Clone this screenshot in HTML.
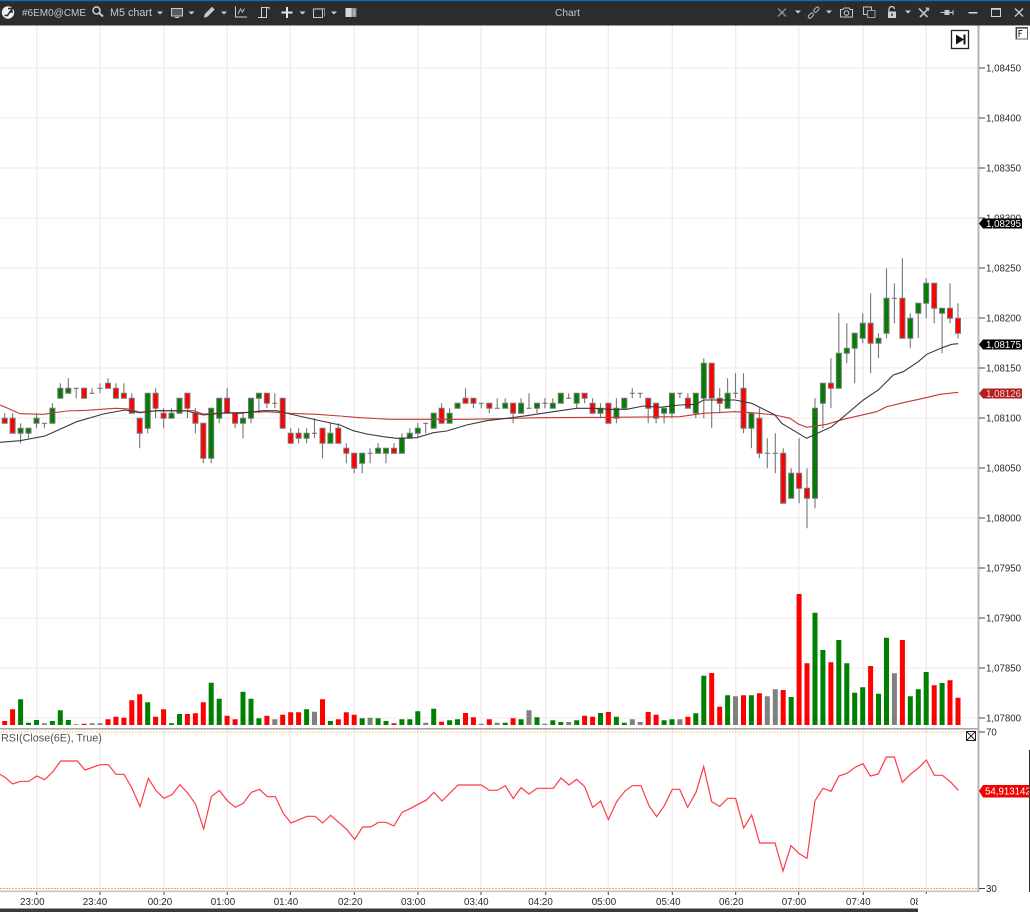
<!DOCTYPE html>
<html>
<head>
<meta charset="utf-8">
<title>Chart</title>
<style>
html,body{margin:0;padding:0;background:#fff;width:1030px;height:912px;overflow:hidden}
svg{display:block;position:absolute;left:0;top:0}
text{font-family:"Liberation Sans",sans-serif}
.p{font-size:9.7px;fill:#2a2a2a}
.t{font-size:9.8px;fill:#2a2a2a}
.w{font-size:9.7px;fill:#fff}
.b{font-size:10px;fill:#c8c8c8}
</style>
</head>
<body>
<svg width="1030" height="912" viewBox="0 0 1030 912" xmlns="http://www.w3.org/2000/svg">
<defs><clipPath id="cl"><rect x="0" y="892" width="918" height="17"/></clipPath></defs>
<rect width="1030" height="912" fill="#fff"/>

<!-- grid -->
<path stroke="#f6ebef" stroke-width="1.2" fill="none" d="M0 68H978M0 118H978M0 168H978M0 218H978M0 268H978M0 318H978M0 368H978M0 418H978M0 468H978M0 518H978M0 568H978M0 618H978M0 668H978M0 718H978"/>
<path stroke="#f3e7eb" stroke-width="1.2" fill="none" d="M36.7 25V891M100 25V891M164 25V891M227.3 25V891M290.3 25V891M354.3 25V891M418 25V891M481 25V891M545.7 25V891M608.3 25V891M672.3 25V891M735.7 25V891M798.7 25V891M863.3 25V891M926.3 25V891"/>

<!-- volume -->
<path stroke="#ff0000" stroke-width="5" fill="none" d="M4.7 721V725M12.6 709.3V725M84.1 723.7V725M108 719.3V725M115.9 716.7V725M123.9 717.7V725M131.8 700.3V725M139.7 694.3V725M155.6 716.7V725M163.6 709.3V725M187.4 714V725M195.4 713.3V725M203.3 702.3V725M227.1 715.7V725M235.1 719.3V725M266.9 715.7V725M282.7 714.7V725M290.7 712.3V725M298.6 712.3V725M322.5 699.3V725M338.3 719.3V725M346.3 712.3V725M354.2 714.7V725M394 723.3V725M441.6 721.7V725M465.5 713V725M473.4 717.3V725M489.3 719.3V725M513.1 718.3V725M584.6 715.7V725M592.6 716.7V725M608.4 712V725M648.2 712V725M656.1 714.7V725M687.9 716.7V725M711.7 673V725M719.7 706.7V725M743.5 695.3V725M759.4 693.3V725M783.2 690V725M799.1 594V725M807 663.3V725M830.9 662.3V725M870.6 666V725M902.4 640V725M934.2 685.3V725M950 680.3V725M958 697.7V725"/>
<path stroke="#008000" stroke-width="5" fill="none" d="M20.6 699.3V725M28.5 722.7V725M36.5 720V725M52.4 721V725M60.3 710.3V725M68.3 720V725M147.7 702.3V725M171.5 723.3V725M179.5 714V725M211.2 682.7V725M219.2 698.7V725M243 691.7V725M251 698.7V725M258.9 718.3V725M306.6 709.3V725M330.4 721V725M362.2 718.3V725M378.1 718.3V725M386 721V725M401.9 719.3V725M409.8 719.3V725M417.8 711.3V725M433.7 708.7V725M449.6 720.3V725M457.5 719.3V725M505.2 722.7V725M521.1 719.3V725M537 717.3V725M552.8 720.3V725M560.8 722V725M576.7 720.3V725M600.5 713V725M616.4 716.7V725M624.3 722.7V725M664.1 720.3V725M672 719.3V725M695.8 713.3V725M703.8 675.7V725M727.6 695.3V725M751.4 695.3V725M791.2 697V725M815 612.7V725M822.9 650V725M838.8 640V725M846.8 663.3V725M854.7 692.7V725M862.7 687.3V725M878.5 693.7V725M886.5 637.7V725M910.3 696.3V725M918.3 689.3V725M926.2 672V725M942.1 683V725"/>
<path stroke="#808080" stroke-width="5" fill="none" d="M44.4 723.3V725M76.2 724.3V725M92.1 723.3V725M100 723.3V725M274.8 719.3V725M314.5 711.7V725M370.1 717.7V725M425.7 722.7V725M481.3 723.7V725M497.2 722.7V725M529 710.3V725M544.9 723.7V725M568.7 722V725M632.3 719.3V725M640.2 722V725M679.9 719.3V725M735.5 696.3V725M767.3 696.3V725M775.3 689.3V725M894.4 673.3V725"/>

<!-- candles -->
<g transform="translate(0 .3)">
<path stroke="#777" stroke-width="1.1" fill="none" d="M4.7 413V423M12.6 413V433M20.6 423V443M28.5 428V438M36.5 413V428M44.4 423V428M42 423h5M52.4 403V423M60.3 383V398M68.3 378V393M76.2 388V398M73.7 388h5M84.1 388V398M92.1 388V393M89.6 393h5M100 383V393M97.5 388h5M108 378V388M115.9 383V398M123.9 383V398M131.8 393V413M139.7 418V448M147.7 393V433M155.6 388V418M163.6 408V428M171.5 408V418M179.5 398V413M187.4 393V418M195.4 408V433M203.3 423V463M211.2 408V463M219.2 398V423M227.1 388V413M235.1 413V428M243 413V438M251 398V423M258.9 393V413M266.9 393V408M274.8 393V408M272.3 403h5M282.7 398V428M290.7 428V443M298.6 428V443M306.6 428V443M314.5 418V438M312 433h5M322.5 428V458M330.4 423V443M338.3 423V443M346.3 443V463M354.2 453V473M362.2 453V473M370.1 448V463M367.6 453h5M378.1 443V453M386 448V463M394 443V453M401.9 433V453M409.8 428V438M417.8 423V438M425.7 423V433M423.2 423h5M433.7 413V428M441.6 403V423M449.6 408V423M457.5 403V408M465.5 388V403M473.4 398V408M481.3 403V408M478.8 403h5M489.3 403V413M497.2 398V408M494.7 408h5M505.2 398V408M513.1 403V423M521.1 398V413M529 393V408M526.5 408h5M537 403V413M544.9 398V408M542.4 403h5M552.8 398V408M560.8 393V403M568.7 393V398M566.2 398h5M576.7 393V408M584.6 393V403M592.6 398V413M600.5 403V418M608.4 403V423M616.4 398V423M624.3 398V408M632.3 388V398M629.8 393h5M640.2 393V398M637.7 393h5M648.2 398V423M656.1 403V423M664.1 408V423M672 393V418M679.9 393V398M677.4 393h5M687.9 393V408M695.8 393V418M703.8 358V418M711.7 363V428M719.7 388V413M727.6 378V408M735.5 373V398M733 393h5M743.5 373V433M751.4 413V448M759.4 408V458M767.3 438V468M764.8 453h5M775.3 433V473M772.8 453h5M783.2 448V503M791.2 468V498M799.1 438V503M807 468V528M815 398V508M822.9 383V428M830.9 358V408M838.8 313V388M846.8 323V363M854.7 333V383M862.7 313V343M870.6 293V373M878.5 333V358M886.5 268V338M894.4 283V323M891.9 298h5M902.4 258V338M910.3 313V348M918.3 303V338M926.2 278V318M934.2 283V323M942.1 308V353M950 283V323M958 303V338"/>
<g stroke="#777" stroke-width="1">
<path fill="#ff0000" d="M2.2 418h5v5h-5zM10.1 418h5v15h-5zM81.6 388h5v10h-5zM105.5 383h5v5h-5zM113.4 388h5v10h-5zM121.4 393h5v5h-5zM129.3 398h5v15h-5zM137.2 418h5v15h-5zM153.1 393h5v15h-5zM161.1 413h5v5h-5zM184.9 393h5v15h-5zM192.9 413h5v10h-5zM200.8 423h5v35h-5zM224.6 398h5v15h-5zM232.6 413h5v10h-5zM264.4 393h5v10h-5zM280.2 398h5v30h-5zM288.2 433h5v10h-5zM296.1 433h5v5h-5zM320 428h5v15h-5zM335.8 428h5v15h-5zM343.8 448h5v5h-5zM351.7 453h5v15h-5zM391.5 448h5v5h-5zM439.1 408h5v15h-5zM463 398h5v5h-5zM470.9 398h5v5h-5zM486.8 403h5v5h-5zM510.6 403h5v10h-5zM582.1 393h5v5h-5zM590.1 403h5v10h-5zM605.9 403h5v20h-5zM645.7 398h5v10h-5zM653.6 403h5v15h-5zM685.4 398h5v10h-5zM709.2 363h5v35h-5zM717.2 398h5v5h-5zM741 388h5v40h-5zM756.9 418h5v35h-5zM780.7 453h5v50h-5zM796.6 473h5v15h-5zM804.5 488h5v10h-5zM828.4 383h5v5h-5zM868.1 323h5v20h-5zM899.9 298h5v40h-5zM931.7 283h5v25h-5zM947.5 308h5v10h-5zM955.5 318h5v15h-5z"/>
<path fill="#007f00" d="M18.1 428h5v5h-5zM26 428h5v5h-5zM34 418h5v5h-5zM49.9 408h5v15h-5zM57.8 388h5v10h-5zM65.8 388h5v5h-5zM145.2 393h5v35h-5zM169 413h5v5h-5zM177 398h5v15h-5zM208.7 408h5v50h-5zM216.7 398h5v20h-5zM240.5 418h5v5h-5zM248.5 398h5v20h-5zM256.4 393h5v5h-5zM304.1 433h5v5h-5zM327.9 433h5v10h-5zM359.7 453h5v10h-5zM375.6 448h5v5h-5zM383.5 448h5v5h-5zM399.4 438h5v15h-5zM407.3 433h5v5h-5zM415.3 428h5v5h-5zM431.2 413h5v15h-5zM447.1 413h5v10h-5zM455 403h5v5h-5zM502.7 403h5v5h-5zM518.6 403h5v10h-5zM534.5 403h5v5h-5zM550.3 403h5v5h-5zM558.3 393h5v10h-5zM574.2 393h5v10h-5zM598 408h5v5h-5zM613.9 408h5v10h-5zM621.8 398h5v10h-5zM661.6 408h5v5h-5zM669.5 393h5v20h-5zM693.3 393h5v20h-5zM701.3 363h5v35h-5zM725.1 393h5v15h-5zM748.9 413h5v15h-5zM788.7 473h5v25h-5zM812.5 408h5v90h-5zM820.4 383h5v20h-5zM836.3 353h5v35h-5zM844.3 348h5v5h-5zM852.2 333h5v15h-5zM860.2 323h5v15h-5zM876 338h5v5h-5zM884 298h5v35h-5zM907.8 318h5v20h-5zM915.8 303h5v10h-5zM923.7 283h5v20h-5zM939.6 308h5v5h-5z"/>
</g>
</g>

<!-- moving averages -->
<polyline fill="none" stroke="#c23a3a" stroke-width="1.1" points="0,405 6.7,407.7 20,413.7 43.3,414.3 66.7,411 86.7,410.3 115,408.3 128.3,409 140,412.3 156.7,410.7 193.3,410.7 203.3,414 216.7,413.3 266.7,411.7 290,413.3 316.7,414.3 340,416 360,417.7 390,419.3 466.7,419.3 500,418.7 540,417.7 613.3,417.3 680,416.7 703.3,413.3 735,411.7 751.7,412.7 775,415 790,418.3 798.3,424 806.7,427.3 826.7,424.3 843.3,419.3 876.7,411.7 886.7,406.7 903.3,402.7 923.3,398.3 940,394.3 958.3,392.3"/>
<polyline fill="none" stroke="#3a3a3a" stroke-width="1.1" points="0,442.3 20,440.7 45,436 58.3,430 76.7,421.7 103.3,414 125,410 140,412.7 156.7,410.7 186.7,411 203.3,415 226.7,412.7 240,413.3 263.3,410.7 276.7,410.7 290,414 316.7,420 340,425 353.3,430.7 366.7,434 383.3,436.7 396.7,438.3 416.7,437.7 433.3,432.7 446.7,431 466.7,425 486.7,420.7 506.7,418.3 526.7,415.7 553.3,411.7 576.7,408.3 593.3,408.3 610,409.3 626.7,409.3 643.3,406 660,407.3 680,405 696,404.3 703.7,400 735,400 751.7,403.3 775,415 781.7,423.3 806.7,438.3 831.7,426.7 863.3,400 878.3,390 893.3,375 903.3,371.7 918.3,361.7 926.7,354.3 943.3,347.3 951.7,344.3 958.3,343.7"/>

<!-- separators -->
<rect x="0" y="728" width="978" height="1.6" fill="#a8a8a8"/>
<path d="M0 732H978" stroke="#f5c15c" stroke-width="1" stroke-dasharray="1.5 1.5" fill="none"/>
<path d="M0 888.5H978" stroke="#f4b22e" stroke-width="1" stroke-dasharray="2 1" fill="none"/>
<rect x="0" y="890.5" width="978" height="1.6" fill="#c4c4c4"/>

<!-- RSI -->
<polyline fill="none" stroke="#ff3a44" stroke-width="1.2" transform="translate(0 750) scale(.33333)" vector-effect="non-scaling-stroke" points="0,73 15,82 38,102 62,94 87,94 110,78 134,89 158,66 182,33 232,33 255,60 300,44 325,44 348,73 372,73 396,115 420,170 445,85 468,122 492,145 516,134 540,104 564,130 587,163 611,237 634,140 658,121 682,152 706,172 730,160 754,127 778,118 802,140 826,140 850,190 873,219 897,209 921,199 945,199 968,219 992,196 1016,217 1040,238 1064,268 1088,231 1112,231 1136,217 1158,217 1182,228 1206,187 1230,176 1254,163 1278,151 1302,127 1326,153 1374,105 1444,105 1468,121 1492,121 1516,107 1540,146 1545,138"/>
<polyline fill="none" stroke="#ff3a44" stroke-width="1.2" transform="translate(515 750) scale(.33333)" vector-effect="non-scaling-stroke" points="0,138 18,113 42,132 66,115 115,115 138,84 162,105 185,88 209,110 233,172 257,153 280,209 305,155 330,123 352,107 378,107 402,167 425,200 448,167 472,118 494,118 518,172 543,127 566,50 590,155 614,169 638,145 662,145 686,234 710,195 734,279 780,279 804,363 828,287 852,311 876,325 900,152 924,115 948,124 972,78 996,70 1020,52 1044,41 1066,78 1090,72 1114,21 1138,21 1162,97 1186,73 1210,54 1234,30 1258,76 1282,76 1306,95 1330,121"/>
<text x="1" y="741.5" font-size="10.8" fill="#555">RSI(Close(6E), True)</text>

<!-- axis -->
<rect x="977.5" y="25" width="2" height="867" fill="#b4b4b4"/>
<path stroke="#444" stroke-width="1" fill="none" d="M979 68h6M979 118h6M979 168h6M979 218h6M979 268h6M979 318h6M979 368h6M979 418h6M979 468h6M979 518h6M979 568h6M979 618h6M979 668h6M979 718h6M979 732h6M979 888.5h6"/>
<g class="p">
<text class="p" x="986" y="71.5">1,08450</text>
<text class="p" x="986" y="121.5">1,08400</text>
<text class="p" x="986" y="171.5">1,08350</text>
<text class="p" x="986" y="221.5">1,08300</text>
<text class="p" x="986" y="271.5">1,08250</text>
<text class="p" x="986" y="321.5">1,08200</text>
<text class="p" x="986" y="371.5">1,08150</text>
<text class="p" x="986" y="421.5">1,08100</text>
<text class="p" x="986" y="471.5">1,08050</text>
<text class="p" x="986" y="521.5">1,08000</text>
<text class="p" x="986" y="571.5">1,07950</text>
<text class="p" x="986" y="621.5">1,07900</text>
<text class="p" x="986" y="671.5">1,07850</text>
<text class="p" x="986" y="721.5">1,07800</text>
<text class="p" x="986" y="735.5">70</text>
<text class="p" x="986" y="892">30</text>
</g>

<!-- tags -->
<path fill="#000" d="M979 223.5l4-5h39v10h-39z"/>
<text class="w" x="986" y="227">1,08295</text>
<path fill="#000" d="M979 344.5l4-5h39v10h-39z"/>
<text class="w" x="986" y="348">1,08175</text>
<path fill="#b02020" d="M979 393.5l4-5h39v10h-39z"/>
<text class="w" x="986" y="397" style="fill:#f4d0d0">1,08126</text>
<path fill="#f00000" d="M979 791l4-6h47v12.5h-47z"/>
<text class="w" x="985" y="794.5">54,913142</text>

<!-- bottom time axis -->
<path stroke="#444" stroke-width="1" fill="none" d="M36.7 892v3M100 892v3M164 892v3M227.3 892v3M290.3 892v3M354.3 892v3M418 892v3M481 892v3M545.7 892v3M608.3 892v3M672.3 892v3M735.7 892v3M798.7 892v3M863.3 892v3M926.3 892v2"/>
<g clip-path="url(#cl)">
<text class="t" x="20" y="905">23:00</text>
<text class="t" x="82.7" y="905">23:40</text>
<text class="t" x="147.7" y="905">00:20</text>
<text class="t" x="210.7" y="905">01:00</text>
<text class="t" x="273.7" y="905">01:40</text>
<text class="t" x="338" y="905">02:20</text>
<text class="t" x="401" y="905">03:00</text>
<text class="t" x="464" y="905">03:40</text>
<text class="t" x="528.3" y="905">04:20</text>
<text class="t" x="591.7" y="905">05:00</text>
<text class="t" x="656" y="905">05:40</text>
<text class="t" x="719" y="905">06:20</text>
<text class="t" x="781.7" y="905">07:00</text>
<text class="t" x="846" y="905">07:40</text>
<text class="t" x="910" y="905">08:00</text>
</g>
<rect x="0" y="908.5" width="918" height="3.5" fill="#3a3a3a"/>
<rect x="1029" y="750" width="1" height="142" fill="#333"/>

<!-- close box in RSI -->
<rect x="966.5" y="731.5" width="9" height="9" fill="#fff" stroke="#222" stroke-width="1"/>
<path d="M966.5 731.5l9 9M975.5 731.5l-9 9" stroke="#222" stroke-width="1" fill="none"/>

<!-- go to end button -->
<rect x="951.5" y="30.500" width="17" height="18" fill="#fff" stroke="#222" stroke-width="1.3"/>
<path d="M956 34.5l8 5-8 5z" fill="#111"/>
<rect x="963.5" y="34.5" width="2" height="10" fill="#111"/>

<!-- F box -->
<rect x="1016" y="27.5" width="11.5" height="11.5" fill="#fff" stroke="#666" stroke-width="1"/>
<path d="M1016.5 28h10.5M1016.5 28v10.5" stroke="#444" stroke-width="1.2" fill="none"/>
<path d="M1019 37v-6.500h3.500M1019 33.500h2.500" stroke="#333" stroke-width="1" fill="none"/>

<!-- title bar -->
<rect x="0" y="0" width="1030" height="25.5" fill="#2c2c2c"/>
<rect x="0" y="0" width="1030" height="1.2" fill="#0c6cb4"/>

<!-- logo -->
<circle cx="8" cy="12.5" r="6.2" fill="#f0f0f0"/>
<path d="M4.5 15.500h3l3.500-5.500M8 8.500h4.500l-1.500 3.500h2" stroke="#2c2c2c" stroke-width="1.5" fill="none"/>
<text class="b" x="22" y="16">#6EM0@CME</text>
<!-- search -->
<circle cx="96.5" cy="10.5" r="3.5" fill="none" stroke="#d0d0d0" stroke-width="1.5"/>
<path d="M99 13l4 3.500" stroke="#d0d0d0" stroke-width="2" fill="none"/>
<text class="b" x="110" y="16" style="font-size:10.8px">M5 chart</text>
<path d="M157 11.5h6l-3 3z" fill="#d0d0d0"/>
<!-- monitor -->
<rect x="171.5" y="8.500" width="11" height="7.500" fill="#5c5c5c" stroke="#c8c8c8"/>
<path d="M175 17.500h4" stroke="#c8c8c8" fill="none"/>
<path d="M188.5 11.5h6l-3 3z" fill="#d0d0d0"/>
<!-- pencil -->
<path d="M204 17.500l1-3.500 7-7 2.500 2.500-7 7z" fill="#c8c8c8" stroke="#bbb" stroke-width=".5"/>
<path d="M221 11.5h6l-3 3z" fill="#d0d0d0"/>
<!-- chart -->
<path d="M235.5 6.500v10.500h11.500" stroke="#d0d0d0" fill="none"/>
<path d="M238 14l2.500-5 2 3 2-3.500" stroke="#b8b8b8" fill="none"/>
<!-- scroll -->
<path d="M258 17.500h3.500V7.500h7.500v2M261.500 7.500H269M266.500 8v9.500h-5" stroke="#d0d0d0" stroke-width="1" fill="none"/>
<!-- plus -->
<path d="M287 7v11M281.500 12.500h11" stroke="#e4e4e4" stroke-width="2" fill="none"/>
<path d="M299.5 11.5h6l-3 3z" fill="#d0d0d0"/>
<!-- window -->
<rect x="313.5" y="9" width="9" height="8.500" fill="none" stroke="#c8c8c8"/>
<path d="M315.5 8.500h9v8" stroke="#8a8a8a" fill="none"/>
<path d="M331 11.5h6l-3 3z" fill="#d0d0d0"/>
<!-- book -->
<rect x="345.5" y="8" width="6" height="9" fill="#d8d8d8"/>
<rect x="351.5" y="8" width="5" height="9" fill="#8e8e8e"/>
<path d="M354 9.500v6" stroke="#ddd" fill="none"/>

<text x="555" y="16" font-size="10.2" fill="#c8c8c8">Chart</text>

<!-- right side icons -->
<path d="M778 8.500l8 8M786 8.500l-8 8" stroke="#8a8a8a" stroke-width="1.3" fill="none"/>
<circle cx="782" cy="12.5" r="1.6" fill="#8a8a8a"/>
<path d="M795 10.5h6l-3 3z" fill="#d0d0d0"/>
<rect x="-3.200" y="-1.600" width="6" height="3.200" rx="1.500" transform="translate(811 15.500) rotate(-45)" fill="none" stroke="#c8c8c8" stroke-width=".9"/>
<rect x="-3.200" y="-1.600" width="6" height="3.200" rx="1.500" transform="translate(816.500 9.500) rotate(-45)" fill="none" stroke="#c8c8c8" stroke-width=".9"/>
<path d="M826 10.5h6l-3 3z" fill="#d0d0d0"/>
<path d="M840.5 9.500h2.500l1-1.500h5l1 1.500h2.500v7.500h-12z" fill="none" stroke="#c8c8c8"/>
<circle cx="846.5" cy="13" r="2.3" fill="none" stroke="#c8c8c8"/>
<rect x="863.5" y="7" width="8" height="7.500" fill="none" stroke="#c8c8c8"/>
<rect x="867.5" y="10.500" width="7.500" height="7" fill="#2c2c2c" stroke="#9a9a9a"/>
<path d="M889 11.500V9.500a2.700 2.700 0 0 1 5.500-.5" stroke="#d8d8d8" stroke-width="1.2" fill="none"/>
<rect x="888" y="11.5" width="8" height="6.500" fill="#d0d0d0"/>
<rect x="891.3" y="13.500" width="1.400" height="2.500" fill="#2c2c2c"/>
<path d="M905 10.5h6l-3 3z" fill="#d0d0d0"/>
<path d="M919 8.500l8.500 8.500M929 8l-9 9" stroke="#c0c0c0" stroke-width="1.6" fill="none"/>
<path d="M926 7.500l3 3" stroke="#c0c0c0" stroke-width="1.6" fill="none"/>
<path d="M940.5 12.500h13" stroke="#c8c8c8" stroke-width="1" fill="none"/>
<rect x="944.5" y="10" width="5" height="5" fill="#c8c8c8"/>
<path d="M953 10v5" stroke="#c8c8c8" fill="none"/>
<rect x="968.5" y="12" width="9" height="1.5" fill="#d4d4d4"/>
<rect x="991.5" y="8.500" width="9" height="8" fill="none" stroke="#d4d4d4" stroke-width="1"/>
<path d="M991.5 9h9" stroke="#d4d4d4" stroke-width="1.5" fill="none"/>
<path d="M1015 8.500l8 8M1023 8.500l-8 8" stroke="#d4d4d4" stroke-width="1.3" fill="none"/>
</svg>
</body>
</html>
